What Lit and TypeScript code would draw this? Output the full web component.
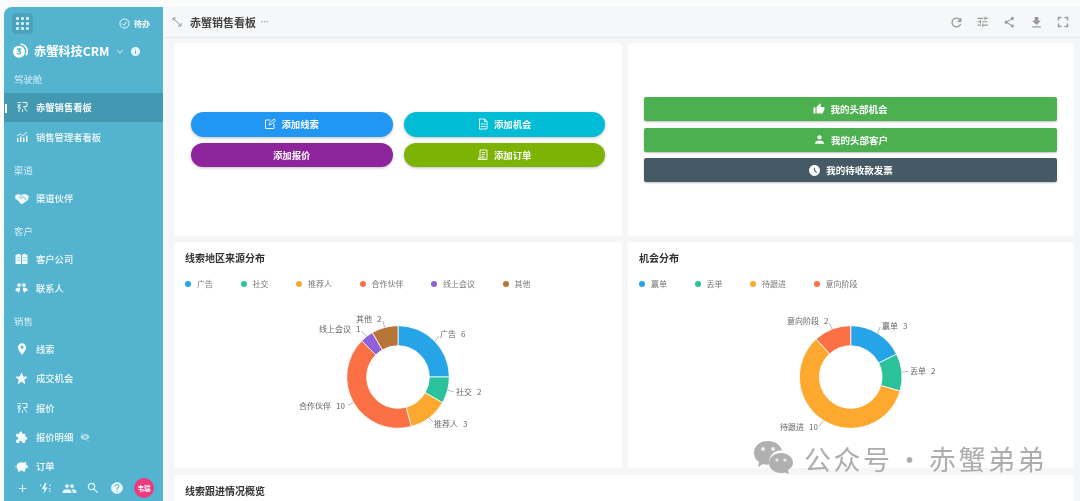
import { LitElement, html, css, svg } from "lit";
import { customElement } from "lit/decorators.js";

const P: Record<string, string> = {
  thumb: "M1 21h4V9H1v12zm22-11c0-1.1-.9-2-2-2h-6.31l.95-4.57.03-.32c0-.41-.17-.79-.44-1.06L14.17 1 7.59 7.59C7.22 7.95 7 8.45 7 9v10c0 1.1.9 2 2 2h9c.83 0 1.54-.5 1.84-1.22l3.02-7.05c.09-.23.14-.47.14-.73v-2z",
  person: "M12 12c2.21 0 4-1.79 4-4s-1.79-4-4-4-4 1.79-4 4 1.79 4 4 4zm0 2c-2.67 0-8 1.34-8 4v2h16v-2c0-2.66-5.33-4-8-4z",
  clock: "M11.99 2C6.47 2 2 6.48 2 12s4.47 10 9.99 10C17.52 22 22 17.52 22 12S17.52 2 11.99 2zm3.3 14.71L11 12.41V7h2v4.59l3.71 3.71-1.42 1.41z",
  star: "M12 17.27L18.18 21l-1.64-7.03L22 9.24l-7.19-.61L12 2 9.19 8.63 2 9.24l5.46 4.73L5.82 21z",
  place: "M12 2C8.13 2 5 5.13 5 9c0 5.25 7 13 7 13s7-7.75 7-13c0-3.87-3.13-7-7-7zm0 9.5c-1.38 0-2.5-1.12-2.5-2.5s1.12-2.5 2.5-2.5 2.5 1.12 2.5 2.5-1.12 2.5-2.5 2.5z",
  people: "M16 11c1.66 0 2.99-1.34 2.99-3S17.66 5 16 5c-1.66 0-3 1.34-3 3s1.34 3 3 3zm-8 0c1.66 0 2.99-1.34 2.99-3S9.66 5 8 5C6.34 5 5 6.34 5 8s1.34 3 3 3zm0 2c-2.33 0-7 1.17-7 3.5V19h14v-2.5c0-2.33-4.67-3.5-7-3.5zm8 0c-.29 0-.62.02-.97.05 1.16.84 1.97 1.97 1.97 3.45V19h6v-2.5c0-2.33-4.67-3.5-7-3.5z",
  search: "M15.5 14h-.79l-.28-.27C15.41 12.59 16 11.11 16 9.5 16 5.91 13.09 3 9.5 3S3 5.91 3 9.5 5.91 16 9.5 16c1.61 0 3.09-.59 4.23-1.57l.27.28v.79l5 4.99L20.49 19l-4.99-5zm-6 0C7.01 14 5 11.99 5 9.5S7.01 5 9.5 5 14 7.01 14 9.5 11.99 14 9.5 14z",
  help: "M12 2C6.48 2 2 6.48 2 12s4.48 10 10 10 10-4.48 10-10S17.52 2 12 2zm1 17h-2v-2h2v2zm2.07-7.75l-.9.92C13.45 12.9 13 13.5 13 15h-2v-.5c0-1.1.45-2.1 1.17-2.83l1.24-1.26c.37-.36.59-.86.59-1.41 0-1.1-.9-2-2-2s-2 .9-2 2H8c0-2.21 1.79-4 4-4s4 1.79 4 4c0 .88-.36 1.68-.93 2.25z",
  ext: "M20.5 11H19V7c0-1.1-.9-2-2-2h-4V3.5C13 2.12 11.88 1 10.5 1S8 2.12 8 3.5V5H4c-1.1 0-1.99.9-1.99 2v3.8H3.5c1.49 0 2.7 1.21 2.7 2.7s-1.21 2.7-2.7 2.7H2V20c0 1.1.9 2 2 2h3.8v-1.5c0-1.49 1.21-2.7 2.7-2.7 1.49 0 2.7 1.21 2.7 2.7V22H17c1.1 0 2-.9 2-2v-4h1.5c1.38 0 2.5-1.12 2.5-2.5S21.88 11 20.5 11z",
  refresh: "M17.65 6.35C16.2 4.9 14.21 4 12 4c-4.42 0-7.99 3.58-7.99 8s3.57 8 7.99 8c3.73 0 6.84-2.55 7.73-6h-2.08c-.82 2.33-3.04 4-5.65 4-3.31 0-6-2.69-6-6s2.69-6 6-6c1.66 0 3.14.69 4.22 1.78L13 11h7V4l-2.35 2.35z",
  tune: "M3 17v2h6v-2H3zM3 5v2h10V5H3zm10 16v-2h8v-2h-8v-2h-2v6h2zM7 9v2H3v2h4v2h2V9H7zm14 4v-2H11v2h10zm-6-4h2V7h4V5h-4V3h-2v6z",
  share: "M18 16.08c-.76 0-1.44.3-1.96.77L8.91 12.7c.05-.23.09-.46.09-.7s-.04-.47-.09-.7l7.05-4.11c.54.5 1.25.81 2.04.81 1.66 0 3-1.34 3-3s-1.34-3-3-3-3 1.34-3 3c0 .24.04.47.09.7L8.04 9.81C7.5 9.31 6.79 9 6 9c-1.66 0-3 1.34-3 3s1.34 3 3 3c.79 0 1.5-.31 2.04-.81l7.12 4.16c-.05.21-.08.43-.08.65 0 1.61 1.31 2.92 2.92 2.92 1.61 0 2.92-1.31 2.92-2.92s-1.31-2.92-2.92-2.92z",
  download: "M19 9h-4V3H9v6H5l7 7 7-7zM5 18v2h14v-2H5z",
  full: "M7 14H5v5h5v-2H7v-3zm-2-4h2V7h3V5H5v5zm12 7h-3v2h5v-5h-2v3zM14 5v2h3v3h2V5h-5z",
  add: "M19 13h-6v6h-2v-6H5v-2h6V5h2v6h6v2z",
  piggy: "M19 8.500l.5-4-3.600 1.600A8.500 8.500 0 0 0 12 5C7.500 5 4 8 4 12c0 2 .9 3.800 2.300 5v3h3.500v-1.500a10 10 0 0 0 4.400 0V20h3.500v-3c.9-.8 1.500-1.600 1.900-2.600H22V10h-2a7 7 0 0 0-1-1.500zM1 11c0 1 .6 1.600 1.500 1.800l.5-1.800z",
  contacts: "M7.500 11a3.500 3.500 0 1 0 0-7 3.500 3.500 0 0 0 0 7zm9 0a3.500 3.500 0 1 0 0-7 3.500 3.500 0 0 0 0 7zM1 19v-3c0-2.500 3-3.500 6-3.500 1 0 1.800.1 2.500.3L9 19H7.500v2h-2l-.3-2zm22 0v-3c0-2.500-3-3.500-6-3.500-1 0-1.800.1-2.500.3L15 19h1.500v2h2l.3-2z",
  eyeoff: "M12 5C7 5 2.700 8.100 1 12c1.700 3.900 6 7 11 7s9.300-3.100 11-7c-1.700-3.900-6-7-11-7zm0 11a4 4 0 1 1 0-8 4 4 0 0 1 0 8zM4 3l17 18-1.500 1.200L2.700 4.200z",
  info: "M12 2a10 10 0 1 0 0 20 10 10 0 0 0 0-20zm1 15h-2v-6h2v6zm0-8h-2V7h2v2z",
};

const ico = (name: string, size: number) => html`<svg class="ic" width=${size} height=${size} viewBox="0 0 24 24" fill="currentColor"><path d=${P[name]}></path></svg>`;

const board = (size: number) => html`<svg class="ic" width=${size} height=${size} viewBox="0 0 24 24" fill="none" stroke="currentColor" stroke-width="2"><path d="M3 3h7M3 8h7M6 8v14M3 13l3-3M6 12l4 3M13 3h9v8h-7M15 11l7 10M13 16v6"></path></svg>`;
const bars = (size: number) => html`<svg class="ic" width=${size} height=${size} viewBox="0 0 24 24" fill="currentColor"><path d="M2 14h3v8H2zM8 11h3v11H8zM14 13h3v9h-3zM20 9h3v13h-3z"></path><path d="M2 10l6-4 6 3 8-7" fill="none" stroke="currentColor" stroke-width="1.800"></path></svg>`;
const bld = (size: number) => html`<svg class="ic" width=${size} height=${size} viewBox="0 0 24 24" fill="currentColor"><path fill-rule="evenodd" d="M1 6l5-3 5 2v17H1zM13 5l5-2 5 3v16H13zM3.500 9v2h1.500V9zM7 9v2h1.500V9zM3.500 14v2h1.500v-2zM7 14v2h1.500v-2zM15.500 9v2H17V9zM19 9v2h1.500V9zM15.500 14v2H17v-2zM19 14v2h1.500v-2z"></path></svg>`;
const pen = (size: number) => html`<svg class="ic" width=${size} height=${size} viewBox="0 0 24 24" fill="none" stroke="currentColor" stroke-width="1.800"><path d="M13 4H3v17h17V11M10 14l1-4L20 2l3 3-9 8z"></path></svg>`;
const doc = (size: number) => html`<svg class="ic" width=${size} height=${size} viewBox="0 0 24 24" fill="none" stroke="currentColor" stroke-width="1.800"><path d="M5 2h10l5 5v15H5zM15 2v5h5M8 12h9M8 17h9"></path></svg>`;
const order = (size: number) => html`<svg class="ic" width=${size} height=${size} viewBox="0 0 24 24" fill="none" stroke="currentColor" stroke-width="1.800"><path d="M6 2h14v19H3v-3h14M6 2v16M9.500 7h7M9.500 11h7M9.500 15h4"></path></svg>`;
const hands = (size: number) => html`<svg class="ic" width=${size} height=${size} viewBox="0 0 24 24"><path fill="currentColor" d="M0 8l5-3 5 2 2-1 4-1 4 1 4 3-2 7-9 6c-1 .7-2 .5-3-.2L4 15 1 14z"></path><path fill="none" stroke="#54b4cf" stroke-width="1.500" d="M12 7L8 11c1 1.500 3 1.500 4.500.5L14 10l6 6"></path></svg>`;
const bolt = (size: number) => html`<svg class="ic" width=${size} height=${size} viewBox="0 0 24 24" fill="currentColor"><path d="M11 2L5 13h5l-2 9 8-12h-5l3-8z"></path><circle cx="20" cy="6" r="1.500"></circle><circle cx="3" cy="6" r="1.500"></circle><circle cx="20" cy="17" r="1.500"></circle><path d="M17 12h5v1.500h-5z"></path></svg>`;

type Seg = { name: string; v: number; c: string; x: number; y: number; line: string };

const leftSegs: Seg[] = [
  { name: "广告", v: 6, c: "#26a4e8", x: 266, y: 37, line: "M261 41l4-5" },
  { name: "社交", v: 2, c: "#2bc19a", x: 282, y: 95, line: "M273.600 90l6.400 2" },
  { name: "推荐人", v: 3, c: "#fda92f", x: 260, y: 127, line: "M255 118l4 4" },
  { name: "合作伙伴", v: 10, c: "#fb7145", x: 125, y: 109, line: "M179 103l-5 2" },
  { name: "线上会议", v: 1, c: "#9060d8", x: 145, y: 32, line: "M192.800 36.300L187 31" },
  { name: "其他", v: 2, c: "#b8753a", x: 182, y: 22, line: "M210.700 27.500L209 21" },
];
const rightSegs: Seg[] = [
  { name: "赢单", v: 3, c: "#26a4e8", x: 254, y: 29, line: "M249.700 33.400L252 27" },
  { name: "丢单", v: 2, c: "#2bc19a", x: 282, y: 74, line: "M273.800 72l6.200-.5" },
  { name: "待跟进", v: 10, c: "#fda92f", x: 152, y: 130, line: "M195.700 120.600L191 126" },
  { name: "意向阶段", v: 2, c: "#fb7145", x: 159, y: 24, line: "M204.200 29.200L201 23" },
];

function arc(cx: number, cy: number, r0: number, r1: number, a0: number, a1: number) {
  const pt = (r: number, a: number) => `${(cx + r * Math.sin(a)).toFixed(2)} ${(cy - r * Math.cos(a)).toFixed(2)}`;
  const large = a1 - a0 > Math.PI ? 1 : 0;
  return `M${pt(r1, a0)}A${r1} ${r1} 0 ${large} 1 ${pt(r1, a1)}L${pt(r0, a1)}A${r0} ${r0} 0 ${large} 0 ${pt(r0, a0)}Z`;
}

function donut(segs: Seg[], cx: number, width: number) {
  const total = segs.reduce((s, d) => s + d.v, 0);
  let a = 0;
  const cy = 77;
  return html`<svg class="chart" width=${width} height="168" viewBox="0 0 ${width} 168">
    ${segs.map((d) => {
      const a0 = a;
      a += (d.v / total) * Math.PI * 2;
      return svg`<path d=${arc(cx, cy, 31.3, 51.3, a0, a)} fill=${d.c} stroke="#fff" stroke-width="0.8"></path>
        <path d=${d.line} fill="none" stroke="#999" stroke-width="0.7"></path>
        <text x=${d.x} y=${d.y} class="lab">${d.name}<tspan dx="5">${d.v}</tspan></text>`;
    })}
  </svg>`;
}

const groups: { label?: string; items: { t: string; i: unknown; on?: boolean; off?: boolean }[] }[] = [
  { label: "驾驶舱", items: [{ t: "赤蟹销售看板", i: board(12), on: true }, { t: "销售管理者看板", i: bars(12) }] },
  { label: "渠道", items: [{ t: "渠道伙伴", i: hands(14) }] },
  { label: "客户", items: [{ t: "客户公司", i: bld(13) }, { t: "联系人", i: ico("contacts", 13) }] },
  {
    label: "销售",
    items: [
      { t: "线索", i: ico("place", 14) },
      { t: "成交机会", i: ico("star", 15) },
      { t: "报价", i: board(12) },
      { t: "报价明细", i: ico("ext", 13), off: true },
      { t: "订单", i: ico("piggy", 15) },
    ],
  },
];

@customElement("app-root")
export class AppRoot extends LitElement {
  static styles = css`
    :host {
      display: block;
      width: 1080px;
      height: 501px;
      overflow: hidden;
      background: #fbfcfc;
      font-family: "Noto Sans CJK SC", "Noto Sans", sans-serif;
    }
    .ic { display: block; flex: none; }
    .page { display: flex; height: 494px; padding: 7px 0 0 4px; position: relative; filter: blur(0.4px); }
    .side {
      width: 159px; flex: none; background: #54b4cf; color: #fff; border-top-left-radius: 8px;
      display: flex; flex-direction: column; overflow: hidden;
    }
    .top { height: 31px; display: flex; align-items: center; justify-content: space-between; padding: 2px 13px 0 8px; flex: none; box-sizing: border-box; }
    .grid { width: 21px; height: 21px; border-radius: 4px; background: #4aa3bc; display: grid; grid-template-columns: repeat(3, 3px); gap: 2px; place-content: center; }
    .grid i { width: 3px; height: 3px; background: #d7eef5; border-radius: 1px; }
    .todo { display: flex; align-items: center; gap: 4px; font-size: 8px; font-weight: 700; }
    .brand { height: 22px; display: flex; align-items: center; padding: 4px 0 0 8px; box-sizing: border-box; font-size: 12.200px; font-weight: 700; flex: none; }
    .brand .name { margin-left: 6px; white-space: nowrap; }
    .brand .chev { margin-left: 7px; width: 4px; height: 4px; border-right: 1px solid #cde8f0; border-bottom: 1px solid #cde8f0; transform: rotate(45deg) translateY(-2px); }
    .brand .ic:last-child { margin-left: 9px; }
    .nav { flex: 1; overflow: hidden; }
    .sec { height: 31.600px; display: flex; align-items: center; padding: 5px 0 0 10px; font-size: 9.400px; color: #d5edf4; box-sizing: border-box; }
    .sec.first { height: 32.500px; padding-top: 6px; }
    .item { height: 29.400px; display: flex; align-items: center; font-size: 9.300px; font-weight: 500; position: relative; color: #f4fbfd; }
    .item.on { background: #4399b1; font-weight: 700; }
    .item.on::before { content: ""; position: absolute; left: 1px; top: 11px; width: 2px; height: 9px; background: #fff; }
    .item .slot { width: 32px; display: flex; justify-content: center; padding-left: 3px; box-sizing: border-box; flex: none; }
    .item .off { margin-left: 7px; color: #bcdde7; }
    .foot { height: 26px; display: flex; align-items: center; flex: none; padding: 0 9px 0 12px; justify-content: space-between; background: #54b4cf; }
    .foot .ic { color: #eaf7fa; }
    .ava { width: 20px; height: 20px; border-radius: 50%; background: #ee3a7f; font-size: 6.500px; font-weight: 700; display: flex; align-items: center; justify-content: center; }
    .main { flex: 1; min-width: 0; display: flex; flex-direction: column; background: #f5f6f7; }
    .head { height: 30px; flex: none; display: flex; align-items: center; padding: 0 3.700px 0 8px; background: #f6f7f8; border-bottom: 1px solid #e8e9ea; border-top-left-radius: 8px; color: #9a9a9a; }
    .head .title { margin-left: 7px; font-size: 11px; font-weight: 700; color: #444; }
    .head .more { margin-left: 5px; font-family: "Liberation Sans", sans-serif; font-size: 8px; font-weight: 700; color: #999; line-height: 1; }
    .head .tools { margin-left: auto; display: flex; }
    .head .tools span { width: 26.700px; display: flex; justify-content: center; align-items: center; height: 18px; }
    .content { padding: 5px 6px 0 11px; display: grid; grid-template-columns: 448px 446px; grid-template-rows: 193px 226px 100px; gap: 6px; }
    .card { background: #fff; border-radius: 4px; box-sizing: border-box; overflow: hidden; }
    .wide { grid-column: 1 / 3; padding: 9px 11px; margin-top: 1px; }
    .actions { display: flex; flex-direction: column; justify-content: center; }
    .pills { display: grid; grid-template-columns: 1fr 1fr; gap: 6px 11px; padding: 0 17px; }
    .pill { height: 24.500px; border-radius: 13px; display: flex; align-items: center; justify-content: center; gap: 5px; color: #fff; font-size: 9.400px; font-weight: 700; box-shadow: 0 1px 3px rgba(0,0,0,.25); }
    .bars { display: flex; flex-direction: column; gap: 6.500px; padding: 0 17px 0 16px; }
    .bar { height: 24px; border-radius: 2px; display: flex; align-items: center; justify-content: center; gap: 5px; color: #fff; font-size: 9.500px; font-weight: 700; box-shadow: 0 1px 2px rgba(0,0,0,.25); }
    .ctitle { font-size: 10px; font-weight: 700; color: #333; line-height: 14px; padding: 9px 0 0 11px; }
    .wide .ctitle { padding: 0; }
    .legend { display: flex; padding: 13px 0 0 11px; font-size: 8px; color: #777; line-height: 12px; }
    .legend span { display: flex; align-items: center; gap: 6px; margin-right: 27.500px; }
    .legend i { width: 6px; height: 6px; border-radius: 50%; }
    .chart { display: block; margin-top: 10px; }
    .lab { font-size: 8px; fill: #666; font-family: "Noto Sans CJK SC", sans-serif; }
    .mark { position: absolute; left: 753px; top: 437px; display: flex; align-items: center; gap: 9px; color: #adadad; font-size: 27px; line-height: 36px; letter-spacing: 2.500px; word-spacing: -5px; white-space: nowrap; }
    .mark span { padding-top: 4px; }
  `;

  private chart(title: string, segs: Seg[], cx: number, w: number) {
    return html`<div class="card">
      <div class="ctitle">${title}</div>
      <div class="legend">${segs.map((d) => html`<span><i style="background:${d.c}"></i>${d.name}</span>`)}</div>
      ${donut(segs, cx, w)}
    </div>`;
  }

  render() {
    return html`<div class="page">
      <aside class="side">
        <div class="top">
          <div class="grid">${Array.from({ length: 9 }, () => html`<i></i>`)}</div>
          <div class="todo">
            <svg class="ic" width="11" height="11" viewBox="0 0 24 24" fill="none" stroke="currentColor" stroke-width="2"><circle cx="12" cy="12" r="10"></circle><path d="M7 12l4 4 6-8"></path></svg>待办
          </div>
        </div>
        <div class="brand">
          <svg class="ic" width="16" height="16" viewBox="0 0 24 24"><circle cx="10.500" cy="13" r="9" fill="#fff"></circle><path d="M7.500 9h5l-2.500 3c2 0 3 1 3 2.200 0 2-3.500 2.800-5.500 1.300" fill="none" stroke="#54b4cf" stroke-width="2"></path><path d="M13 1.500a11 11 0 0 1 8 17" fill="none" stroke="#fff" stroke-width="2.500"></path></svg>
          <span class="name">赤蟹科技CRM</span><span class="chev"></span>
          <svg class="ic" width="11" height="11" viewBox="0 0 24 24" fill="#e6f5f9"><path d=${P.info}></path></svg>
        </div>
        <div class="nav">
          ${groups.map((g, idx) => html`
            <div class="sec ${idx === 0 ? "first" : ""}">${g.label}</div>
            ${g.items.map((it) => html`<div class="item ${it.on ? "on" : ""}">
              <span class="slot">${it.i}</span>${it.t}${it.off ? html`<span class="off">${ico("eyeoff", 10)}</span>` : ""}
            </div>`)}
          `)}
        </div>
        <div class="foot">
          ${ico("add", 13)}${bolt(13)}${ico("people", 15)}${ico("search", 14)}${ico("help", 14)}<div class="ava">韦瑞</div>
        </div>
      </aside>
      <div class="main">
        <div class="head">
          <svg class="ic" width="12" height="12" viewBox="0 0 24 24" fill="none" stroke="currentColor" stroke-width="2"><path d="M4 4l16 16M4 10V4h6M20 14v6h-6"></path></svg>
          <span class="title">赤蟹销售看板</span><span class="more">···</span>
          <div class="tools">
            <span>${ico("refresh", 15)}</span><span>${ico("tune", 13.5)}</span><span>${ico("share", 12.5)}</span><span>${ico("download", 15)}</span><span>${ico("full", 18)}</span>
          </div>
        </div>
        <div class="content">
          <div class="card actions">
            <div class="pills">
              <div class="pill" style="background:#2196f3">${pen(12)}添加线索</div>
              <div class="pill" style="background:#00bcd4">${doc(12)}添加机会</div>
              <div class="pill" style="background:#8e249c">添加报价</div>
              <div class="pill" style="background:#7cb305">${order(12)}添加订单</div>
            </div>
          </div>
          <div class="card actions">
            <div class="bars">
              <div class="bar" style="background:#4caf50">${ico("thumb", 12)}我的头部机会</div>
              <div class="bar" style="background:#4caf50">${ico("person", 13)}我的头部客户</div>
              <div class="bar" style="background:#455a64">${ico("clock", 13)}我的待收款发票</div>
            </div>
          </div>
          ${this.chart("线索地区来源分布", leftSegs, 224, 448)}
          ${this.chart("机会分布", rightSegs, 222.7, 446)}
          <div class="card wide"><div class="ctitle">线索跟进情况概览</div></div>
        </div>
        <div class="mark">
          <svg class="ic" width="42" height="34" viewBox="0 0 42 34" fill="#b0b0b0">
            <path d="M15 1C7 1 1 6 1 13c0 4 2 7 5 9l-1 5 5-3c2 .6 4 .8 6 .6C15 15 23 9 29 11 28 5 22 1 15 1z"></path>
            <path d="M28 13c-7 0-12 4.500-12 10s5 10 12 10c1.500 0 3-.2 4-.6l4 1.600-1-4c3-2 5-4 5-7 0-5.500-5-10-12-10z"></path>
            <circle cx="10" cy="9" r="2" fill="#eee"></circle><circle cx="20" cy="9" r="2" fill="#eee"></circle>
            <circle cx="24" cy="20" r="1.600" fill="#eee"></circle><circle cx="32" cy="20" r="1.600" fill="#eee"></circle>
          </svg>
          <span>公众号 · 赤蟹弟弟</span>
        </div>
      </div>
    </div>`;
  }
}
